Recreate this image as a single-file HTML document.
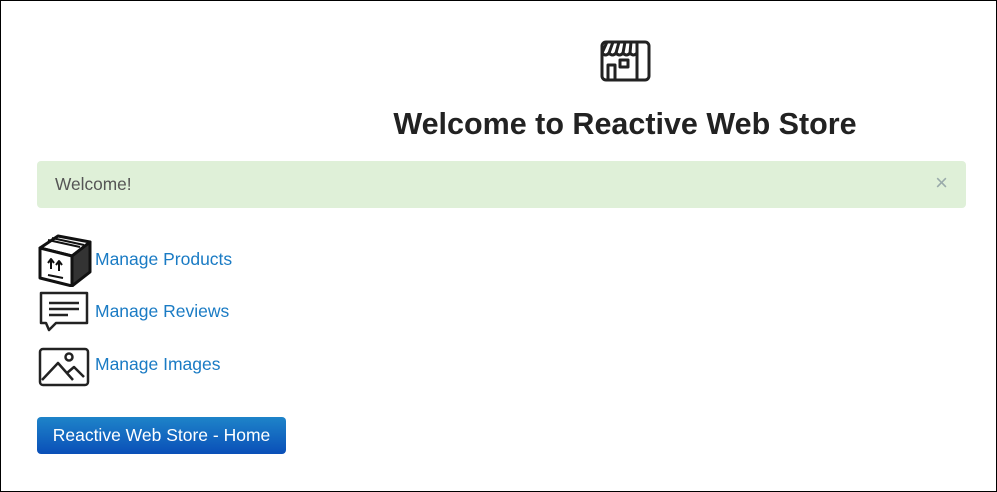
<!DOCTYPE html>
<html><head><style>
html,body{margin:0;padding:0}
body{width:995px;height:490px;border:1px solid #000;font-family:"Liberation Sans",sans-serif;position:relative;overflow:hidden;background:#fff}
.abs{position:absolute}
h1{position:absolute;left:0;width:1248px;text-align:center;top:106px;margin:0;font-size:30.5px;font-weight:bold;color:#222}
.alert{left:36px;top:160px;width:929px;height:47px;background:#dff0d8;border-radius:4px}
.alert span{position:absolute;left:18px;top:13px;font-size:17.3px;color:#555}
.alert b{position:absolute;right:18px;top:9px;font-size:22px;color:#9aa;font-weight:normal}
a{color:#1a7bc4;text-decoration:none;font-size:17.5px;position:absolute;left:94px}
.btn{left:36px;top:416px;width:249px;height:37px;border-radius:4px;background:linear-gradient(#1e84c9,#0a4fb8);color:#fff;font-size:17.5px;text-align:center;line-height:37px}
</style></head><body>
<svg class="abs" style="left:598px;top:38px" width="52" height="44" viewBox="0 0 52 44" fill="none" stroke="#222" stroke-width="3" stroke-linejoin="round">
<rect x="3" y="3" width="47" height="38" rx="4"/>
<line x1="38" y1="3" x2="38" y2="41"/>
<path d="M3 14 L8 3 M10 14 L14 3 M17 14 L20 3 M24 14 L26 3 M31 14 L32 3"/>
<path d="M3 14 q3.5 4 7 0 q3.5 4 7 0 q3.5 4 7 0 q3.5 4 7 0 q3.5 4 7 0"/>
<rect x="9" y="26" width="7" height="15"/>
<rect x="21" y="21" width="8" height="7"/>
</svg>
<h1>Welcome to Reactive Web Store</h1>
<div class="abs alert"><span>Welcome!</span><b>×</b></div>
<svg class="abs" style="left:37px;top:233px" width="54" height="53" viewBox="0 0 54 53" fill="none" stroke="#111" stroke-width="3" stroke-linejoin="round">
<path d="M2 14 L34 22 L52 8 L20 2 Z" fill="#fff"/>
<path d="M34 22 L34 52 L52 38 L52 8 Z" fill="#333"/>
<path d="M2 14 L2 44 L34 52 L34 22 Z" fill="#fff"/>
<path d="M10 6 L42 13 M14 4 L46 11" stroke-width="2"/>
<path d="M13 35 V26 M10 29 L13 25 L16 29 M21 37 V28 M18 31 L21 27 L24 31 M10 41 L25 44" stroke-width="2"/>
</svg>
<a style="top:248px">Manage Products</a>
<svg class="abs" style="left:37px;top:289px" width="52" height="44" viewBox="0 0 52 44" fill="none" stroke="#222" stroke-width="2.5" stroke-linejoin="round">
<path d="M3 3 H49 V33 H18 L11 40 L8 33 H3 Z"/>
<path d="M11 13 H41 M11 19 H41 M11 25 H30"/>
</svg>
<a style="top:300px">Manage Reviews</a>
<svg class="abs" style="left:37px;top:346px" width="52" height="40" viewBox="0 0 52 40" fill="none" stroke="#222" stroke-width="2.5" stroke-linejoin="round">
<rect x="2" y="2" width="48" height="36" rx="3"/>
<path d="M4 33 L20 16 L35 33 M29 26 L36 20 L46 30"/>
<circle cx="31" cy="10" r="3.5"/>
</svg>
<a style="top:353px">Manage Images</a>
<div class="abs btn">Reactive Web Store - Home</div>
</body></html>
